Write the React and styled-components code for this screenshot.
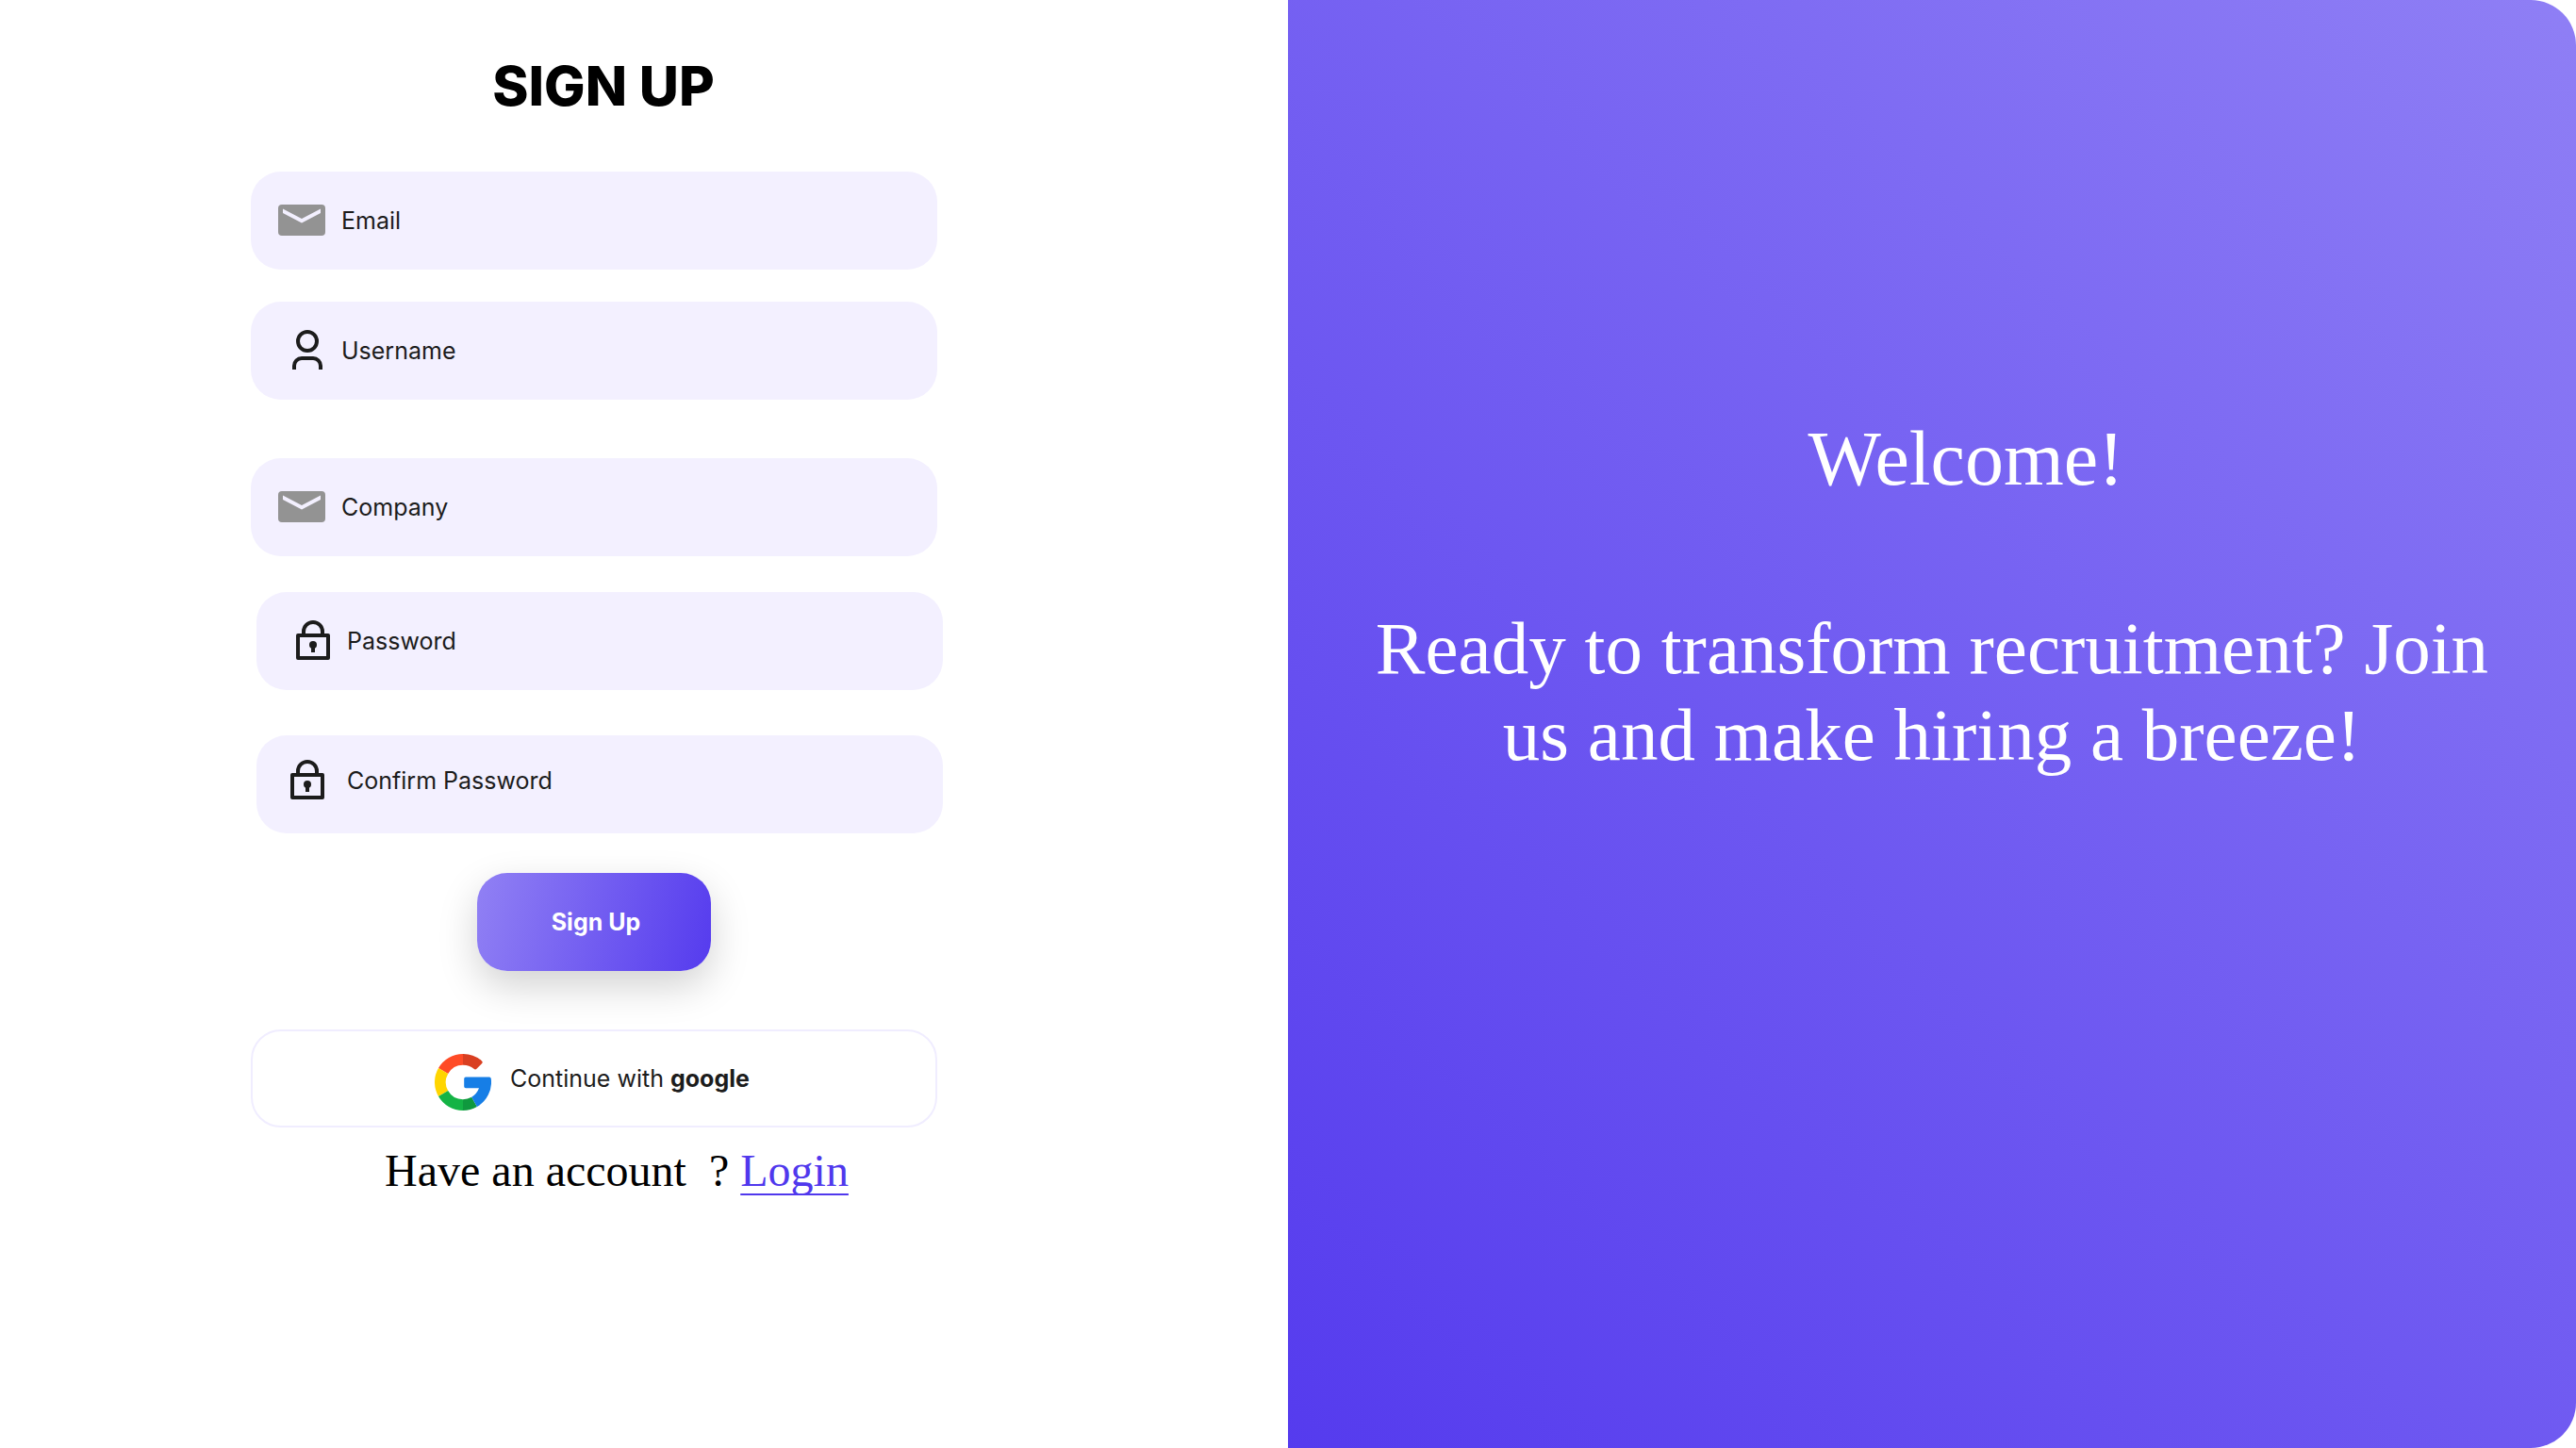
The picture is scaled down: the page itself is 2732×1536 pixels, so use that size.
import React from "react";
import styled, { createGlobalStyle } from "styled-components";

const GlobalStyle = createGlobalStyle`
  * { box-sizing: border-box; }
  body { margin: 0; background: #fff; }
`;

const sans = `Inter, "Open Sans", sans-serif`;
const serif = `"Liberation Serif", serif`;

const Page = styled.main`
  display: grid;
  grid-template-columns: 1fr 1fr;
  min-height: 100vh;
`;

const FormSide = styled.section`
  padding: 50px 40px 50px 266px;
  font-family: ${sans};
  color: #1c1c1c;
`;

const Form = styled.form`
  display: flex;
  flex-direction: column;
  max-width: 728px;
`;

const Title = styled.h1`
  margin: 0 0 50px;
  padding-left: 20px;
  font-size: 58px;
  line-height: 82px;
  font-weight: 800;
  text-align: center;
  color: #000;
`;

const FieldGroup = styled.div`
  display: flex;
  flex-direction: column;
  gap: ${(p) => p.$gap}px;
  margin: 0 ${(p) => -(p.$shift || 0)}px ${(p) => p.$after}px ${(p) => p.$shift || 0}px;
`;

const Field = styled.div`
  display: flex;
  align-items: center;
  height: 104px;
  padding: 0 32px 0 0;
  padding-bottom: ${(p) => (p.$raised ? 8 : 0)}px;
  border-radius: 32px;
  background: #f3f0ff;
`;

const IconSlot = styled.span`
  display: flex;
  flex: 0 0 96px;
  padding-left: ${(p) => p.$inset}px;
`;

const Label = styled.label`
  font-size: 25px;
  line-height: 36px;
`;

const Input = styled.input`
  flex: 1;
  min-width: 0;
  height: 48px;
  margin-left: 16px;
  padding: 0;
  border: 0;
  outline: 0;
  background: transparent;
  font: 25px ${sans};
  color: inherit;
`;

const SubmitButton = styled.button`
  align-self: center;
  width: 248px;
  height: 104px;
  padding: 0 0 0 4px;
  border: 0;
  border-radius: 32px;
  background: linear-gradient(105deg, #9181f4 0%, #553bee 100%);
  box-shadow: 0 16px 42px rgba(0, 0, 0, 0.18);
  font: 700 25px/36px ${sans};
  color: #fff;
  cursor: pointer;
`;

const GoogleButton = styled.button`
  display: flex;
  align-items: center;
  justify-content: center;
  gap: 20px;
  height: 104px;
  margin-top: 62px;
  padding: 0 4px 0 0;
  border: 2px solid #f0edff;
  border-radius: 32px;
  background: #fff;
  font: 25px/36px ${sans};
  color: #1c1c1c;
  cursor: pointer;

  svg { margin-top: 8px; }
`;

const LoginLine = styled.p`
  margin: 16px 0 0;
  padding-left: 48px;
  font: 48px/60px ${serif};
  text-align: center;
  white-space: nowrap;
  color: #000;
`;

const LoginLink = styled.a`
  color: #5038ed;
  text-decoration: underline;
  text-decoration-thickness: 2px;
  text-underline-offset: 8px;
  text-decoration-skip-ink: none;
`;

const WelcomeSide = styled.section`
  padding: 441px 72px 80px;
  border-radius: 0 48px 48px 0;
  background: linear-gradient(43deg, #553bee 0%, #8f7ff5 100%);
  font-family: ${serif};
  text-align: center;
  color: #fff;
`;

const WelcomeTitle = styled.h2`
  margin: 0 0 109px;
  padding-left: 72px;
  font-size: 82px;
  line-height: 92px;
  font-weight: 400;
`;

const WelcomeText = styled.p`
  margin: 0;
  font-size: 79px;
  line-height: 92px;
`;

const MailIcon = () => (
  <svg width="50" height="34" viewBox="0 0 50 34" aria-hidden="true">
    <rect width="50" height="33" rx="4" fill="#939393" />
    <path d="M5 4.5 25 15 45 4.5V9L25 19.5 5 9Z" fill="#f3f0ff" />
  </svg>
);

const UserIcon = () => (
  <svg width="48" height="48" viewBox="0 0 48 48" fill="none" stroke="#1c1c1c" strokeWidth="4" aria-hidden="true">
    <circle cx="24" cy="14" r="10" />
    <path d="M10 44v-4a8 8 0 0 1 8-8h12a8 8 0 0 1 8 8v4" />
  </svg>
);

const LockIcon = () => (
  <svg width="48" height="48" viewBox="0 0 48 48" fill="none" stroke="#1c1c1c" strokeWidth="4" aria-hidden="true">
    <path d="M14 18v-4a10 10 0 0 1 20 0v4" />
    <rect x="8" y="18" width="32" height="24" strokeLinejoin="round" />
    <circle cx="24" cy="28" r="4" fill="#1c1c1c" stroke="none" />
    <path d="M24 28v8" />
  </svg>
);

const GoogleIcon = () => (
  <svg width="60" height="60" viewBox="0 0 60 60" aria-hidden="true">
    <path d="M30 0A30 30 0 0 0 4 15L14.2 21A18.2 18.2 0 0 1 30 11.8Z" fill="#ff4b26" />
    <path d="M30 0A30 30 0 0 1 50 7.4Q51.4 8.7 50.2 10L44.2 16Q43 17 41.6 15.8A18.2 18.2 0 0 0 30 11.8Z" fill="#d93f21" />
    <path d="M4 15A30 30 0 0 0 4 45L14.2 39A18.2 18.2 0 0 1 14.2 21Z" fill="#ffd500" />
    <path d="M4 45A30 30 0 0 0 30 60V48.2A18.2 18.2 0 0 1 14.2 39Z" fill="#14b345" />
    <path d="M30 60A30 30 0 0 0 44.9 56L39.2 45.7A18.2 18.2 0 0 1 30 48.2Z" fill="#0f993e" />
    <path d="M33 24.6H58Q59.6 24.6 59.8 26.2A30 30 0 0 1 44.9 56L39.2 45.7A18.2 18.2 0 0 0 47 36.3H33Q31.2 36.3 31.2 34.5V26.4Q31.2 24.6 33 24.6Z" fill="#167ee6" />
  </svg>
);

function FormField({ id, label, type = "text", icon, inset, raised }) {
  return (
    <Field $raised={raised}>
      <IconSlot $inset={inset}>{icon}</IconSlot>
      <Label htmlFor={id}>{label}</Label>
      <Input id={id} name={id} type={type} />
    </Field>
  );
}

export default function App() {
  return (
    <>
      <GlobalStyle />
      <Page>
        <FormSide>
          <Form onSubmit={(e) => e.preventDefault()}>
            <Title>SIGN UP</Title>
            <FieldGroup $gap={34} $after={62}>
              <FormField id="email" label="Email" type="email" icon={<MailIcon />} inset={29} />
              <FormField id="username" label="Username" icon={<UserIcon />} inset={36} />
            </FieldGroup>
            <FieldGroup $gap={0} $after={38}>
              <FormField id="company" label="Company" icon={<MailIcon />} inset={29} />
            </FieldGroup>
            <FieldGroup $gap={48} $after={42} $shift={6}>
              <FormField id="password" label="Password" type="password" icon={<LockIcon />} inset={36} />
              <FormField id="confirm" label="Confirm Password" type="password" icon={<LockIcon />} inset={30} raised />
            </FieldGroup>
            <SubmitButton type="submit">Sign Up</SubmitButton>
            <GoogleButton type="button">
              <GoogleIcon />
              <span>Continue with <b>google</b></span>
            </GoogleButton>
            <LoginLine>
              Have an account{"\u00a0 "}? <LoginLink href="#login">Login</LoginLink>
            </LoginLine>
          </Form>
        </FormSide>
        <WelcomeSide>
          <WelcomeTitle>Welcome!</WelcomeTitle>
          <WelcomeText>Ready to transform recruitment? Join us and make hiring a breeze!</WelcomeText>
        </WelcomeSide>
      </Page>
    </>
  );
}
